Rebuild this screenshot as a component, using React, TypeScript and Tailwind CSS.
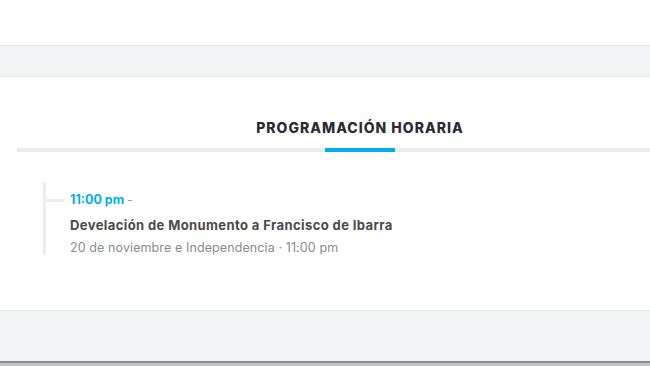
export default function App() {
  return (
    <div className="w-[650px] h-[366px] overflow-hidden bg-white font-['Inter',sans-serif]">
      <div className="h-[45px] bg-white" />
      <div className="h-[32px] bg-[#f2f3f5] border-y border-[#e4e4e6]" />
      <section className="h-[233px] bg-white pl-[17px] overflow-hidden">
        <div className="w-[686px] pt-[43px]">
          <div className="flex flex-col items-center">
            <h2 className="text-[14px] leading-[16px] font-extrabold tracking-[1px] text-[#2b2b33] uppercase">
              Programación horaria
            </h2>
            <div className="mt-[12px] w-full h-[4px] bg-[#ebebeb] flex justify-center">
              <div className="w-[70px] h-[4px] bg-[#00aeef]" />
            </div>
          </div>
          <div className="mt-[30px] ml-[26px] border-l-[3px] border-[#ececec] h-[73px]">
            <div className="flex items-center pt-[9px]">
              <div className="w-[19px] h-[3px] bg-[#ececec]" />
              <span className="ml-[5px] text-[12.5px] leading-[16px] font-bold text-[#00aeef]">11:00 pm</span>
              <span className="ml-[3px] text-[12px] text-[#999]">-</span>
            </div>
            <div className="pl-[24px]">
              <p className="mt-[8px] text-[13px] leading-[16px] font-bold tracking-[0.4px] text-[#4a4a4a]">
                Develación de Monumento a Francisco de Ibarra
              </p>
              <p className="mt-[7px] text-[12.5px] leading-[16px] tracking-[0.1px] text-[#8a8a8a]">
                20 de noviembre e Independencia · 11:00 pm
              </p>
            </div>
          </div>
        </div>
      </section>
      <div className="h-[53px] bg-[#f2f3f5] border-t border-[#e4e4e6] border-b-2 border-b-[#8e8e8e]" />
      <div className="h-[3px] bg-[#c4c4c4]" />
    </div>
  );
}
